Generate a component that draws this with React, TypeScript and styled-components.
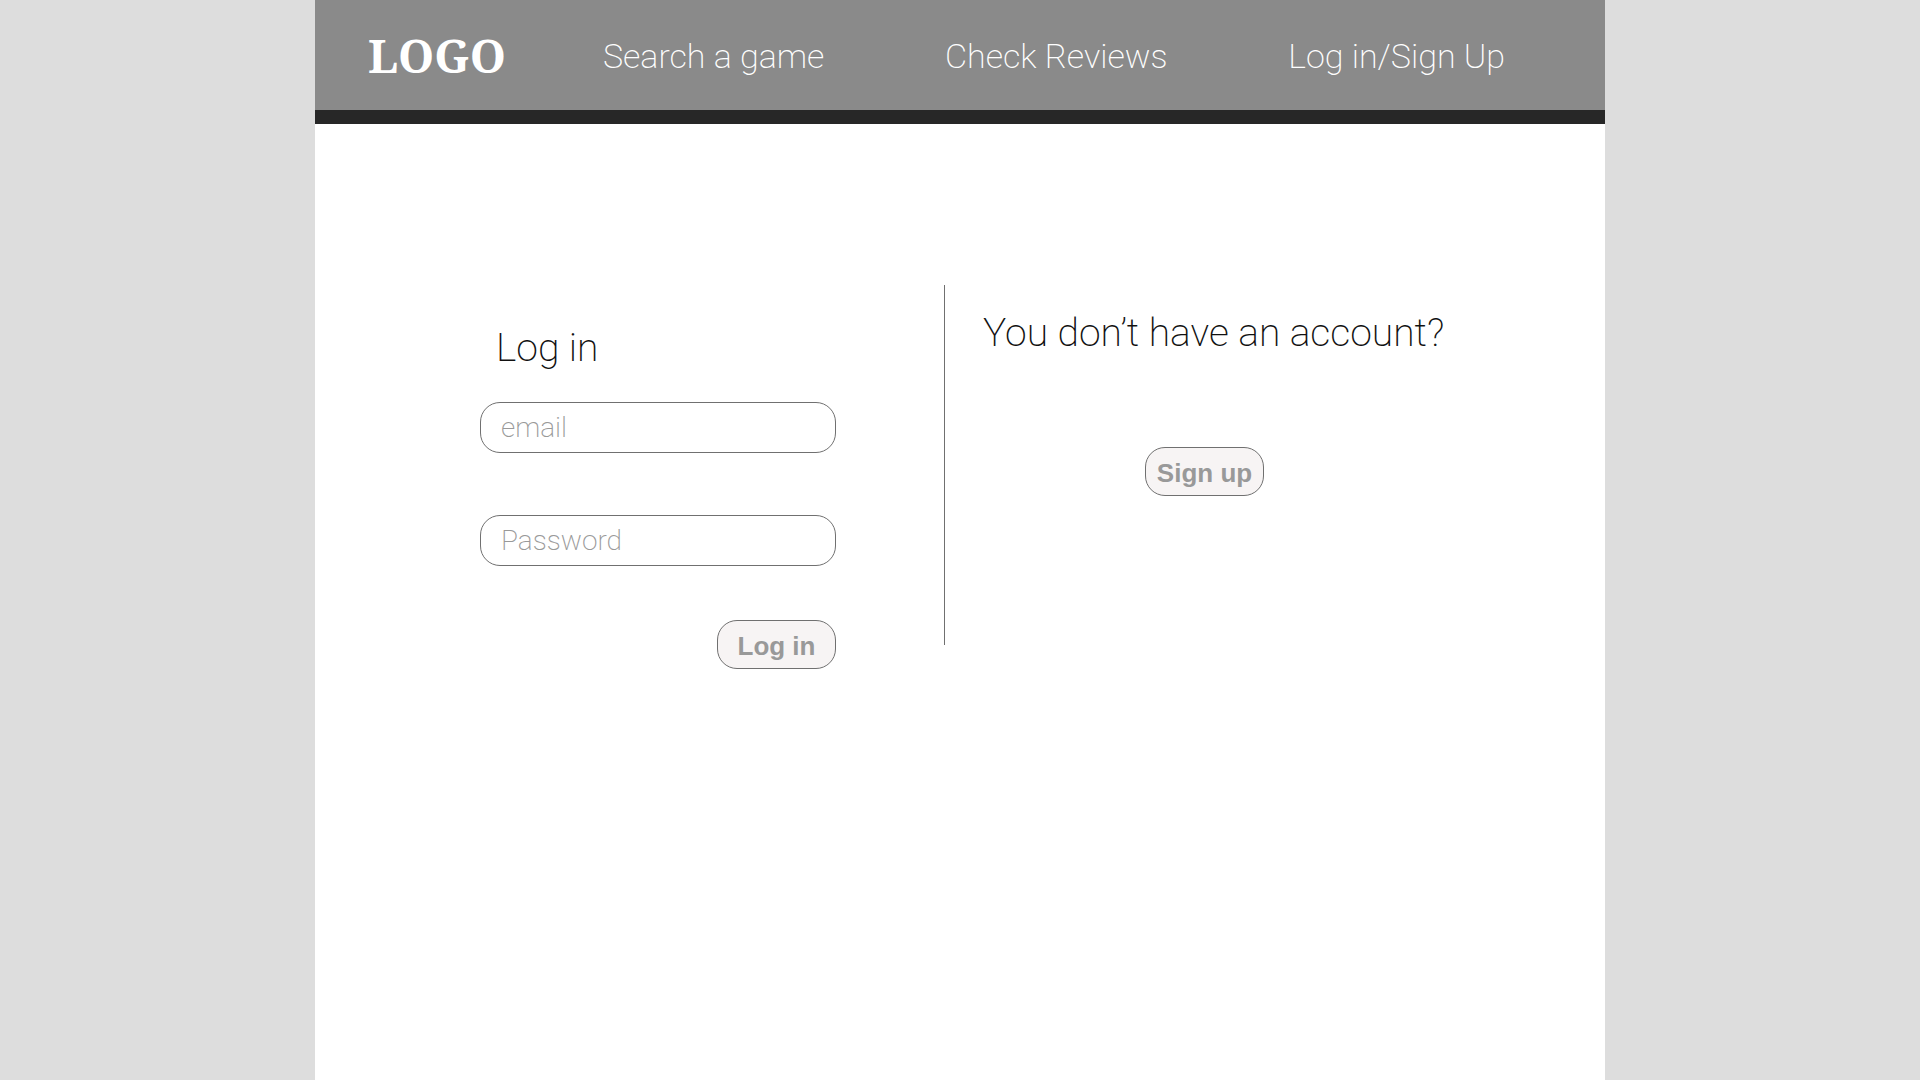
import React from 'react';
import styled, { createGlobalStyle } from 'styled-components';

const GlobalStyle = createGlobalStyle`
  *, *::before, *::after { box-sizing: border-box; }
  body {
    margin: 0;
    background: #dddddd;
    font-family: Roboto, "Liberation Sans", sans-serif;
    font-weight: 200;
  }
`;

const Page = styled.div`
  width: 100%;
  max-width: 1290px;
  min-height: 100vh;
  margin: 0 auto;
  background: #ffffff;
`;

const Header = styled.header`
  display: flex;
  align-items: center;
  height: 124px;
  padding: 0 100px 0 53px;
  background: #8a8a8a;
  border-bottom: 14px solid #272727;
`;

const Logo = styled.a`
  color: #ffffff;
  font-family: "Noto Serif", "Liberation Serif", serif;
  font-size: 46px;
  font-weight: 700;
  text-decoration: none;
`;

const Nav = styled.nav`
  display: flex;
  flex: 1;
  justify-content: space-between;
  padding: 2px 0 0 97px;
`;

const NavLink = styled.a`
  color: #ffffff;
  font-size: 34px;
  line-height: 40px;
  text-decoration: none;
  white-space: nowrap;
`;

const Content = styled.main`
  display: grid;
  grid-template-columns: 629fr 661fr;
  align-items: start;
  padding-top: 161px;
`;

const LoginForm = styled.form`
  display: flex;
  flex-direction: column;
  padding: 39px 108px 0 165px;
`;

const Title = styled.h1`
  margin: 0;
  color: #111111;
  font-size: 39px;
  font-weight: 200;
  line-height: 48px;
`;

const LoginTitle = styled(Title)`
  padding: 0 16px 30px;
`;

const Fields = styled.div`
  display: grid;
  gap: 62px;
  margin-bottom: 54px;
`;

const Field = styled.input`
  width: 100%;
  height: 51px;
  padding: 0 20px;
  border: 1px solid #707070;
  border-radius: 20px;
  background: #ffffff;
  color: #111111;
  font: inherit;
  font-size: 28px;

  &::placeholder {
    color: #999999;
    opacity: 1;
  }
`;

const Button = styled.button`
  width: 119px;
  height: 49px;
  padding: 4px 0 0;
  border: 1px solid #707070;
  border-radius: 20px;
  background: #f7f4f4;
  color: #999999;
  font-family: "Liberation Sans", Arial, sans-serif;
  font-size: 26px;
  font-weight: 700;
  white-space: nowrap;
  cursor: pointer;
`;

const LoginButton = styled(Button)`
  align-self: flex-end;
`;

const SignUp = styled.section`
  min-height: 360px;
  padding: 24px 38px 0;
  border-left: 1px solid #707070;
`;

const SignUpAction = styled.div`
  padding: 90px 0 0 162px;
`;

const links = ['Search a game', 'Check Reviews', 'Log in/Sign Up'];

export default function App() {
  return (
    <>
      <GlobalStyle />
      <Page>
        <Header>
          <Logo href="#">LOGO</Logo>
          <Nav>
            {links.map((label) => (
              <NavLink key={label} href="#">{label}</NavLink>
            ))}
          </Nav>
        </Header>
        <Content>
          <LoginForm onSubmit={(e) => e.preventDefault()}>
            <LoginTitle>Log in</LoginTitle>
            <Fields>
              <Field type="email" aria-label="email" placeholder="email" />
              <Field type="password" aria-label="Password" placeholder="Password" />
            </Fields>
            <LoginButton type="submit">Log in</LoginButton>
          </LoginForm>
          <SignUp>
            <Title as="h2">You don’t have an account?</Title>
            <SignUpAction>
              <Button type="button">Sign up</Button>
            </SignUpAction>
          </SignUp>
        </Content>
      </Page>
    </>
  );
}
